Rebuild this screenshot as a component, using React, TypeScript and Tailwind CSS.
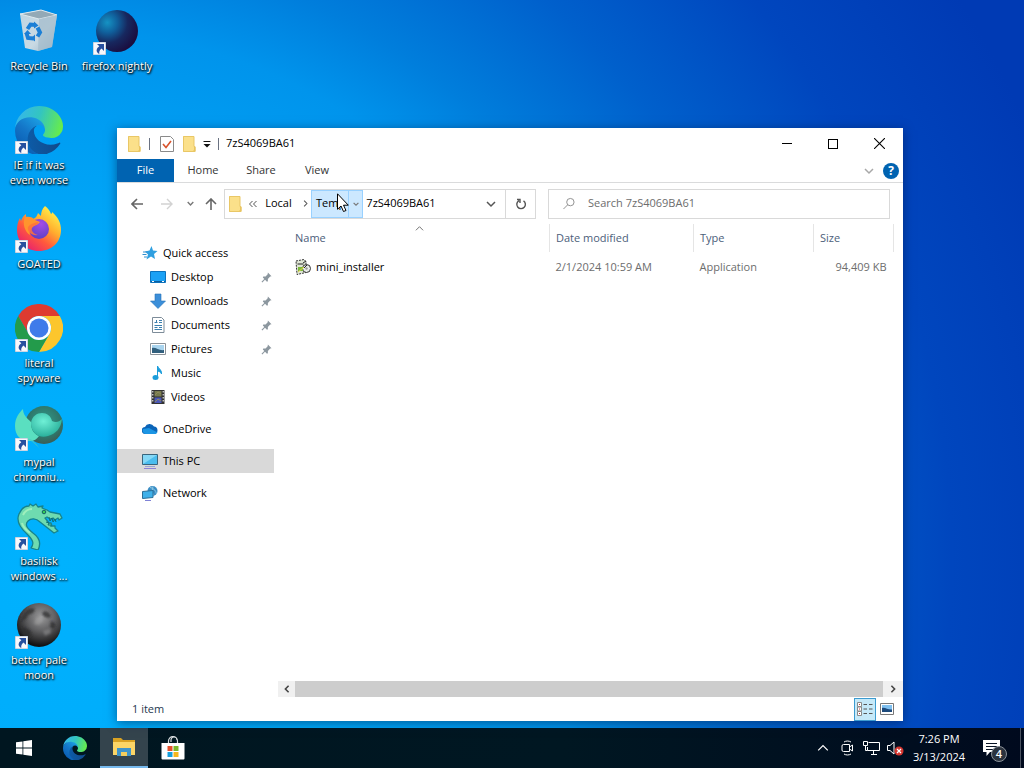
import type { ReactNode } from 'react'

const font = "font-['Open_Sans','Noto_Sans',sans-serif]"

const RecycleBin = () => (
  <svg viewBox="0 0 48 48" className="h-12 w-12">
    <defs>
      <linearGradient id="bin" x1="0" y1="0" x2="1" y2="1">
        <stop offset="0" stopColor="#c9d9e2" />
        <stop offset="0.6" stopColor="#d3dde3" />
        <stop offset="1" stopColor="#9fb4c4" />
      </linearGradient>
    </defs>
    <path d="M5 7l21-4 16 5-5 32-14 4-13-3z" fill="url(#bin)" opacity="0.95" />
    <path d="M5 7l21-4 16 5-18 4z" fill="#93a9b6" stroke="#dfe9ee" />
    <path d="M24 12l18-4-5 32-14 4z" fill="#a3bacb" opacity="0.7" />
    <g fill="none" stroke="#1b7fd6" strokeWidth="4">
      <path d="M12.500 22l3-4.500 5 0.500" />
      <path d="M22.500 20.500l2.500 5-2.500 4" />
      <path d="M18.500 31.500l-5.500-0.500-1.500-5" />
    </g>
    <path d="M19 14.500l4.500 4-4.500 3zM20 27.500v7l-4-3zM9 27l3.500-4 3.500 4z" fill="#1b7fd6" />
  </svg>
)

const Nightly = () => (
  <svg viewBox="0 0 48 48" className="h-12 w-12">
    <defs>
      <radialGradient id="nightly" cx="0.27" cy="0.3" r="0.8">
        <stop offset="0" stopColor="#1593c4" />
        <stop offset="0.3" stopColor="#10609c" />
        <stop offset="0.6" stopColor="#17285f" />
        <stop offset="1" stopColor="#1b0b3c" />
      </radialGradient>
    </defs>
    <circle cx="24" cy="24" r="21" fill="url(#nightly)" />
  </svg>
)

const Edge = ({ className }: { className: string }) => (
  <svg viewBox="0 0 256 256" className={className}>
    <defs>
      <linearGradient id="edge-a" x1="60" y1="177" x2="240" y2="177" gradientUnits="userSpaceOnUse">
        <stop offset="0" stopColor="#0c5ca8" />
        <stop offset="1" stopColor="#114a8b" />
      </linearGradient>
      <linearGradient id="edge-b" x1="150" y1="90" x2="40" y2="225" gradientUnits="userSpaceOnUse">
        <stop offset="0" stopColor="#1b9de2" />
        <stop offset="0.5" stopColor="#1476c8" />
        <stop offset="1" stopColor="#0b5fb4" />
      </linearGradient>
      <linearGradient id="edge-c" x1="20" y1="60" x2="240" y2="130" gradientUnits="userSpaceOnUse">
        <stop offset="0" stopColor="#35b8e6" />
        <stop offset="0.45" stopColor="#33c5c0" />
        <stop offset="1" stopColor="#66eb4e" />
      </linearGradient>
    </defs>
    <path
      d="M235.680 195.460a93.730 93.730 0 0 1-10.540 4.710 101.870 101.870 0 0 1-35.900 6.460c-47.320 0-88.540-32.550-88.540-74.320a31.480 31.480 0 0 1 16.430-27.310c-42.800 1.800-53.800 46.400-53.800 72.530 0 73.880 68.090 81.370 82.760 81.370 7.910 0 19.840-2.300 27-4.560l1.310-.44a128.340 128.340 0 0 0 66.600-52.800 4 4 0 0 0-5.320-5.640z"
      fill="url(#edge-a)"
    />
    <path
      d="M105.700 246.600a79.200 79.200 0 0 1-22.740-21.340 80.720 80.720 0 0 1 29.530-120c3.120-1.470 8.450-4.130 15.540-4a32.350 32.350 0 0 1 25.690 13 31.880 31.880 0 0 1 6.360 18.660c0-.21 24.460-79.600-80-79.600-43.900 0-80 41.660-80 78.210a130.150 130.150 0 0 0 12.110 56 128 128 0 0 0 156.380 67.110 75.550 75.550 0 0 1-62.780-8z"
      fill="url(#edge-b)"
    />
    <path
      d="M152.330 148.860c-.81 1.050-3.300 2.500-3.300 5.660 0 2.610 1.700 5.120 4.720 7.230 14.380 10 41.490 8.680 41.560 8.680a59.560 59.560 0 0 0 30.270-8.350A61.380 61.380 0 0 0 256 109.190c.26-22.410-8-37.310-11.340-43.910C223.460 23.840 177.720 0 128 0A128 128 0 0 0 0 126.200c.48-36.540 36.800-66.050 80-66.050 3.500 0 23.460.34 42 10.070 16.340 8.580 24.900 18.940 30.850 29.210 6.180 10.670 7.280 24.150 7.280 29.520s-2.740 13.330-7.800 19.910z"
      fill="url(#edge-c)"
    />
  </svg>
)

const Firefox = () => (
  <svg viewBox="0 0 48 48" className="h-12 w-12">
    <defs>
      <linearGradient id="fox" x1="0.85" y1="0.1" x2="0.2" y2="0.95">
        <stop offset="0" stopColor="#fff04a" />
        <stop offset="0.35" stopColor="#ffb02e" />
        <stop offset="0.65" stopColor="#ff5a3c" />
        <stop offset="1" stopColor="#e8206f" />
      </linearGradient>
      <radialGradient id="fox-globe" cx="0.6" cy="0.25" r="0.8">
        <stop offset="0" stopColor="#a34be8" />
        <stop offset="1" stopColor="#5940c4" />
      </radialGradient>
    </defs>
    <path
      d="M30 1c3 2 5 5 6 8 1-0.500 1-1 1-2 6 5 9 11 9 18 0 12-9 21-22 21C11 46 2 37 2 25c0-5 1-9 3-12l1 3c1-3 2-5 5-7l0 4c3-0.500 5 0 7 1 3-1 4-3 5-6 1 1 2 2 3 3 0-4 1-7 4-10z"
      fill="url(#fox)"
    />
    <circle cx="24" cy="24" r="10" fill="url(#fox-globe)" />
    <path d="M10 12c4-1 8 0 10 3l5 2c-1 2-4 3-6 4-3 2-5 5-4 9-5-3-8-11-5-18z" fill="#ff942d" />
    <path d="M13 22c2-3 6-4 10-5 1 3-5 3-6 6 -1 3 2 6 6 7-6 1-11-3-10-8z" fill="#ff7139" opacity="0.85" />
  </svg>
)

const Chrome = () => (
  <svg viewBox="0 0 48 48" className="h-12 w-12">
    <path d="M3.200 12a24 24 0 0 1 41.600 0H24a12 12 0 0 0-10.400 18z" fill="#de3b30" />
    <path d="M44.800 12A24 24 0 0 1 24 48l10.400-18A12 12 0 0 0 24 12z" fill="#fcc62d" />
    <path d="M24 48A24 24 0 0 1 3.200 12l10.400 18a12 12 0 0 0 20.800 0z" fill="#239b4b" />
    <circle cx="24" cy="24" r="12" fill="#fff" />
    <circle cx="24" cy="24" r="9.500" fill="#3f7bea" />
  </svg>
)

const Mypal = () => (
  <svg viewBox="0 0 48 48" className="h-12 w-12">
    <defs>
      <radialGradient id="mypal-dark" cx="0.5" cy="0.4" r="0.6">
        <stop offset="0" stopColor="#2f9c8c" />
        <stop offset="0.7" stopColor="#2f766a" />
        <stop offset="1" stopColor="#3b5c55" />
      </radialGradient>
      <radialGradient id="mypal-light" cx="0.4" cy="0.35" r="0.7">
        <stop offset="0" stopColor="#6ff0d6" />
        <stop offset="1" stopColor="#25ab97" />
      </radialGradient>
    </defs>
    <ellipse cx="29" cy="22" rx="19" ry="19" fill="url(#mypal-dark)" />
    <path d="M8 6c0 6 4 9 8 13 0 8 3 12 8 14-2 3-5 5-9 5C6 38 0 33 0 23 0 15 4 10 8 6z" fill="#5adfc0" />
    <path d="M16 20c1-7 6-10 11-10s9 3 10 8c4 2 7 1 10-2-1 9-6 15-14 17-3 1-6 1-9 0-5-2-8-7-8-13z" fill="url(#mypal-light)" />
    <path d="M9 36c6 0 10 4 16 10-4-6-7-9-10-10z" fill="#4fc7c0" opacity="0.6" />
  </svg>
)

const Basilisk = () => (
  <svg viewBox="0 0 48 48" className="h-12 w-12">
    <path
      d="M16 46c4-5 1-9-4-14C4 25 1 19 4 12 7 5 12 4 14 4l1-2 3 2 3-2 2 3 5-1-1 2 5 2 3 2 10 2 2 4-3 2-1-2-3 2-2-2-3 1-3-2-2 1 4 5 2 0 1 3 3 0 0 2 3 3-4 2-14-11c-4-4-9-4-12-1-4 4 0 8 5 12 7 5 8 11 5 17z"
      fill="#6edbb0"
      stroke="#17838c"
      strokeWidth="1.300"
      strokeLinejoin="round"
    />
    <path d="M8 13c2-4 5-6 9-6M7 21c1 4 4 7 8 10" stroke="#9fefbc" strokeWidth="2" fill="none" />
    <circle cx="29" cy="10" r="1.800" fill="#35cf55" stroke="#135f63" />
    <path d="M34 15l1 4 2-3 1 4 2-3 1 3M31 20l3 1-1 2 3 0 0 2" stroke="#0d7076" fill="none" />
  </svg>
)

const PaleMoon = () => (
  <svg viewBox="0 0 48 48" className="h-12 w-12">
    <defs>
      <radialGradient id="moon" cx="0.55" cy="0.32" r="0.65">
        <stop offset="0" stopColor="#9a9a9b" />
        <stop offset="0.5" stopColor="#5e5e60" />
        <stop offset="1" stopColor="#121213" />
      </radialGradient>
      <filter id="moon-soft">
        <feGaussianBlur stdDeviation="1" />
      </filter>
    </defs>
    <circle cx="24" cy="24" r="22" fill="url(#moon)" />
    <g filter="url(#moon-soft)">
      <path
        d="M8 14c3-6 8-8 12-6l-2 4-5 2-2 4-5 2zM29 10l4 1 3 4-2 2-4-1-3-3zM36 20l5 3-2 5-4-2zM8 26l7 3 2 6-6 1-5-5z"
        fill="#2c2c2f"
        opacity="0.75"
      />
      <path d="M21 17l5-1 2 4-4 4-5-1zM28 30l7-2 1 4-6 3z" fill="#b5b5b5" opacity="0.35" />
    </g>
  </svg>
)

const Folder = () => (
  <svg viewBox="0 0 16 18" className="h-[18px] w-4 shrink-0">
    <path d="M2 1h11v11h1.500v4.500H2z" fill="#e8c25c" />
    <path d="M2 1h11v14l-1.500 1.500H2z" fill="#fbe08a" />
    <path d="M2.500 1.500h10.500v10h1v5H2.500z" fill="none" stroke="#e9c766" />
  </svg>
)

const Chevron = ({ d, className }: { d: string; className: string }) => (
  <svg viewBox="0 0 10 10" fill="none" stroke="currentColor" className={className}>
    <path d={d} />
  </svg>
)

const down = 'M1 3l4 4 4-4'
const up = 'M1 7l4-4 4 4'
const left = 'M7 1L3 5l4 4'
const right = 'M3 1l4 4-4 4'

const ShortcutArrow = () => (
  <svg viewBox="0 0 13 13" className="absolute bottom-0 left-0 h-[13px] w-[13px]">
    <path d="M0 0h13v13H0z" fill="#f8f8fb" stroke="#9fb4cc" />
    <path d="M4 2h7v7L8.500 6.500C6.500 8 6 9.500 6.300 12 2.500 10 3 6.500 6.300 4.300z" fill="#27509f" />
  </svg>
)

type DesktopItem = { label: string; icon: ReactNode; shortcut?: boolean }

const columns: DesktopItem[][] = [
  [
    { label: 'Recycle Bin', icon: <RecycleBin /> },
    { label: 'IE if it was\neven worse', icon: <Edge className="h-12 w-12" />, shortcut: true },
    { label: 'GOATED', icon: <Firefox />, shortcut: true },
    { label: 'literal\nspyware', icon: <Chrome />, shortcut: true },
    { label: 'mypal\nchromiu...', icon: <Mypal />, shortcut: true },
    { label: 'basilisk\nwindows ...', icon: <Basilisk />, shortcut: true },
    { label: 'better pale\nmoon', icon: <PaleMoon />, shortcut: true },
  ],
  [{ label: 'firefox nightly', icon: <Nightly />, shortcut: true }],
]

const Desktop = () => (
  <div className="flex">
    {columns.map((items, i) => (
      <div key={i} className="flex w-[78px] flex-col">
        {items.map((item) => (
          <button key={item.label} className="flex h-[99px] flex-col items-center pt-[7px]">
            <span className="relative">
              {item.icon}
              {item.shortcut && <ShortcutArrow />}
            </span>
            <span className="mt-[3px] text-[11px] leading-[15px] whitespace-pre text-white [text-shadow:1px_1px_2px_#000,0_1px_2px_#000]">
              {item.label}
            </span>
          </button>
        ))}
      </div>
    ))}
  </div>
)

const TitleBar = () => (
  <div className="flex h-[31px] items-center pl-[9px]">
    <Folder />
    <span className="mx-[7px] h-3 w-px bg-gray-500" />
    <button aria-label="Properties" className="ml-[3px]">
      <svg viewBox="0 0 14 16" className="h-4 w-[14px]">
        <path d="M0.500 0.500h10l3 3v12h-13z" fill="#fff" stroke="#8a8a8a" />
        <path d="M3 8l3 3.500L11 5" fill="none" stroke="#d8532c" strokeWidth="1.600" />
      </svg>
    </button>
    <button aria-label="New folder" className="ml-[7px]">
      <Folder />
    </button>
    <button aria-label="Customize toolbar" className="ml-[6px]">
      <svg viewBox="0 0 8 8" className="h-2 w-2">
        <path d="M0.500 1.500h7" stroke="#111" />
        <path d="M0.500 4h7L4 7.500z" fill="#111" />
      </svg>
    </button>
    <span className="mx-[7px] h-3 w-px bg-gray-500" />
    <h1 className="text-[11px] text-black">7zS4069BA61</h1>
    <div className="ml-auto flex h-full pr-px text-black">
      <button aria-label="Minimize" className="flex w-[46px] items-center justify-center">
        <span className="h-px w-[10px] bg-black" />
      </button>
      <button aria-label="Maximize" className="flex w-[46px] items-center justify-center">
        <span className="h-[10px] w-[10px] border border-black" />
      </button>
      <button aria-label="Close" className="flex w-[46px] items-center justify-center">
        <Chevron d="M0 0l10 10M10 0L0 10" className="h-[11px] w-[11px]" />
      </button>
    </div>
  </div>
)

const Ribbon = () => (
  <div className="flex h-[24px] border-b border-[#dadbdc] text-[11px] text-[#333]">
    <button className="w-[57px] bg-[#0063b1] text-white">File</button>
    <button className="w-[58px]">Home</button>
    <button className="w-[58px]">Share</button>
    <button className="w-[54px]">View</button>
    <div className="ml-auto flex items-center gap-[9px] pr-1">
      <button aria-label="Expand the ribbon">
        <Chevron d={down} className="h-[10px] w-[10px] stroke-[1.5] text-[#a8a8a8]" />
      </button>
      <button
        aria-label="Help"
        className="h-4 w-4 rounded-full bg-[#0063b1] text-[12px] leading-4 font-bold text-white"
      >
        ?
      </button>
    </div>
  </div>
)

const AddressBar = () => (
  <div className="flex h-[41px] items-center pr-[13px] pl-[5px] text-[#444]">
    <button aria-label="Back" className="flex w-[30px] justify-center">
      <svg viewBox="0 0 12 12" className="h-3 w-3 text-[#666]" fill="none" stroke="currentColor" strokeWidth="1.600">
        <path d="M12 6H1M6 1L1 6l5 5" />
      </svg>
    </button>
    <button aria-label="Forward" className="flex w-[30px] justify-center">
      <svg viewBox="0 0 12 12" className="h-3 w-3 text-[#d2d2d2]" fill="none" stroke="currentColor" strokeWidth="1.400">
        <path d="M0 6h11M6 1l5 5-5 5" />
      </svg>
    </button>
    <button aria-label="Recent locations" className="flex w-4 justify-center">
      <Chevron d={down} className="h-[7px] w-[7px] stroke-2 text-[#777]" />
    </button>
    <button aria-label="Up" className="flex w-[26px] justify-center">
      <svg viewBox="0 0 12 12" className="h-3 w-3 text-[#666]" fill="none" stroke="currentColor" strokeWidth="1.600">
        <path d="M6 12V1M1 6l5-5 5 5" />
      </svg>
    </button>
    <div className="flex h-[30px] flex-1 items-center border border-[#d9d9d9] text-[11px] text-black">
      <span className="ml-[2px]">
        <Folder />
      </span>
      <button aria-label="More locations" className="ml-[5px] w-[10px]">
        <svg viewBox="0 0 10 8" className="h-2 w-[10px]" fill="none" stroke="#555">
          <path d="M4.500 1l-3 3 3 3M8.500 1l-3 3 3 3" />
        </svg>
      </button>
      <button className="ml-[5px] w-[31px]">Local</button>
      <span className="ml-[5px] flex w-[12px] justify-center">
        <Chevron d={right} className="h-[7px] w-[7px] stroke-[1.5] text-[#555]" />
      </span>
      <button className="h-[28px] w-[38px] shrink-0 border border-[#99d1ff] bg-[#cce8ff] pl-1 text-left">
        Temp
      </button>
      <button
        aria-label="Folders in Temp"
        className="flex h-[28px] w-[14px] items-center justify-center border border-l-0 border-[#99d1ff] bg-[#cce8ff]"
      >
        <Chevron d={down} className="h-[6px] w-[6px] stroke-2 text-[#777]" />
      </button>
      <button className="w-[76px] text-center">7zS4069BA61</button>
      <button aria-label="Previous locations" className="ml-auto flex w-[28px] justify-center">
        <Chevron d={down} className="h-[10px] w-[10px] stroke-[1.5] text-[#555]" />
      </button>
      <button aria-label="Refresh" className="flex h-full w-[30px] items-center justify-center border-l border-[#d9d9d9]">
        <svg viewBox="0 0 12 12" className="h-3 w-3 text-[#555]" fill="none" stroke="currentColor" strokeWidth="1.400">
          <path d="M8.500 2.800A4.300 4.300 0 1 1 4 2.600M2 1.500h3V5" />
        </svg>
      </button>
    </div>
    <label className="ml-3 flex h-[30px] w-[342px] items-center border border-[#d9d9d9] pl-[14px]">
      <svg viewBox="0 0 13 13" className="h-[13px] w-[13px] text-[#8a8a8a]" fill="none" stroke="currentColor">
        <circle cx="8" cy="5" r="4" />
        <path d="M5 8l-4.500 4.500" />
      </svg>
      <input
        aria-label="Search 7zS4069BA61"
        placeholder="Search 7zS4069BA61"
        className="ml-[13px] w-full text-[11px] outline-none placeholder:text-[#6d6d6d]"
      />
    </label>
  </div>
)

const icons: Record<string, ReactNode> = {
  star: (
    <>
      <path d="M9.500 1l1.500 4.500 4.500 0.500-3.500 3 1 5-4-2.500-4.500 3 1.500-5L3 6.500l4.500-1z" fill="#2f9fe0" />
      <path d="M1 7h4M0.500 9.500h4M2 12h3" stroke="#2f8fd0" />
    </>
  ),
  desktop: (
    <>
      <path d="M0.500 2.500h15v11h-15z" fill="#1ba1f5" stroke="#0c72bd" />
      <path d="M1 12.500h14" stroke="#0b5d9e" />
      <path d="M2 12.500h2M12 12.500h2" stroke="#fff" />
    </>
  ),
  downloads: <path d="M5 1h6v7h4.500L8 15.500 0.500 8H5z" fill="#3c8fd9" stroke="#2672b8" strokeWidth="0.600" />,
  documents: (
    <>
      <path d="M2.500 0.500h9l2.500 2.500v12.500H2.500z" fill="#fff" stroke="#7d8c99" />
      <path d="M4.500 5.500h3M9 3.500h3M9 5.500h3M4.500 8.500h7.500M4.500 10.500h3M9 10.500h3M4.500 12.500h7.500M6.500 3v3" stroke="#3c7fae" />
    </>
  ),
  pictures: (
    <>
      <path d="M0.500 2.500h15v11h-15z" fill="#fff" stroke="#8b9298" />
      <path d="M2 4h12v8H2z" fill="#a9d4ee" />
      <path d="M2 7c4-1 7 3 12 2v3H2z" fill="#315f7d" />
    </>
  ),
  music: (
    <>
      <path d="M7.500 12V1c1 3 4.500 3.500 4 8-0.500-2-2-2.500-4-3" fill="#1b9ddb" stroke="#1b9ddb" />
      <ellipse cx="5.500" cy="12.500" rx="3" ry="2.500" fill="#1b9ddb" />
    </>
  ),
  videos: (
    <>
      <path d="M1.500 1h13v14h-13z" fill="#333" />
      <path d="M2.800 2v12M13.200 2v12" stroke="#fff" strokeDasharray="1.500 1.500" />
      <path d="M4.500 2h7v5.500h-7z" fill="#777a4e" />
      <path d="M4.500 8.500h7V14h-7z" fill="#4c58b8" />
      <path d="M5 6l3-3 3 2M5 13l3-3 3 2" stroke="#8f8a5c" fill="none" />
    </>
  ),
  onedrive: (
    <>
      <path d="M3.500 13a3.500 3.500 0 0 1-0.500-7 5 5 0 0 1 9-0.500 3.800 3.800 0 0 1 0.500 7.500z" fill="#0a64b8" />
      <path d="M3.500 13a3.500 3.500 0 0 1-2.500-5l6-1 8.500 4.500c-0.500 0.900-1.500 1.500-3 1.500z" fill="#1c95e4" />
    </>
  ),
  pc: (
    <>
      <path d="M0.500 1.500h15v10h-15z" fill="#4bbdee" stroke="#39657d" />
      <path d="M1 11V2h14z" fill="#85d8f6" />
      <path d="M3 13.500h10" stroke="#9aa5d6" />
      <path d="M2 15.500h12" stroke="#8d83d8" />
    </>
  ),
  network: (
    <>
      <circle cx="10.500" cy="6" r="5" fill="#3a8dc4" />
      <path d="M8 2.500c3.500 0.500 6 3 6.500 6.500M11 1.500c-1 3-1 5 0.500 9" stroke="#8fcae6" fill="none" />
      <path d="M0.500 6.500l10.500-1v7l-10.500 1z" fill="#3fb1ea" stroke="#2b6f97" />
      <path d="M3 15.500h6" stroke="#7f82d6" />
    </>
  ),
  installer: (
    <>
      <path d="M1 2l8-1.500 2 2v11L2 15.500z" fill="#dfe6d5" stroke="#333" strokeDasharray="2 1" />
      <circle cx="11.500" cy="9.500" r="4" fill="#e9ece9" stroke="#333" />
      <path d="M2.500 5h6M8 4l3-2M9 9l3-3" stroke="#222" />
      <path d="M3 8h5v4H3z" fill="#7bb83a" />
      <path d="M3 13l6-5" stroke="#e7d34c" />
      <circle cx="11.500" cy="9.500" r="1.200" fill="#9b9b9b" />
    </>
  ),
}

const Icon = ({ name }: { name: string }) => (
  <svg viewBox="0 0 16 16" className="h-4 w-4 shrink-0">
    {icons[name]}
  </svg>
)

const Pin = () => (
  <svg viewBox="0 0 12 12" className="mr-[2px] ml-auto h-[11px] w-[11px]">
    <path d="M7.500 0.500l4 4-1.500 0.500-2.500 2.500v2.500l-1 0.500L2 6l0.500-1H5L7.300 2.500z" fill="#8c979f" />
    <path d="M4.500 7.500L1 11" stroke="#8c979f" strokeWidth="1.200" />
  </svg>
)

const places = [
  { label: 'Desktop', icon: 'desktop', pinned: true },
  { label: 'Downloads', icon: 'downloads', pinned: true },
  { label: 'Documents', icon: 'documents', pinned: true },
  { label: 'Pictures', icon: 'pictures', pinned: true },
  { label: 'Music', icon: 'music', pinned: false },
  { label: 'Videos', icon: 'videos', pinned: false },
]

const roots = [
  { label: 'OneDrive', icon: 'onedrive' },
  { label: 'This PC', icon: 'pc', selected: true },
  { label: 'Network', icon: 'network' },
]

const Sidebar = () => (
  <nav className="w-[157px] shrink-0 pt-[17px] text-[11px] text-black">
    <a href="#quick-access" className="flex h-6 items-center gap-[5px] pl-[25px]">
      <Icon name="star" />
      Quick access
    </a>
    {places.map((p) => (
      <a key={p.label} href={`#${p.icon}`} className="flex h-6 items-center gap-[5px] pl-[33px]">
        <Icon name={p.icon} />
        {p.label}
        {p.pinned && <Pin />}
      </a>
    ))}
    {roots.map((r) => (
      <a
        key={r.label}
        href={`#${r.icon}`}
        className={`mt-2 flex h-6 items-center gap-[5px] pl-[25px] ${r.selected ? 'bg-[#d9d9d9]' : ''}`}
      >
        <Icon name={r.icon} />
        {r.label}
      </a>
    ))}
  </nav>
)

const FileList = () => (
  <div className="flex min-w-0 flex-1 flex-col pl-1">
    <table className="mr-[9px] table-fixed border-collapse text-left text-[11px] text-[#6d6d6d]">
      <thead>
        <tr className="h-[28px] text-[#4c607a] [&>th]:border-r [&>th]:border-[#e5e5e5] [&>th]:font-normal">
          <th className="relative pl-[17px]">
            Name
            <Chevron d={up} className="absolute top-0 left-[137px] h-[9px] w-[9px] text-[#666]" />
          </th>
          <th className="w-[144px] pl-[6px]">Date modified</th>
          <th className="w-[120px] pl-[6px]">Type</th>
          <th className="w-[80px] pl-[6px]">Size</th>
        </tr>
      </thead>
      <tbody>
        <tr className="h-[30px]">
          <td className="pl-[17px] text-black">
            <span className="flex items-center gap-[5px]">
              <Icon name="installer" />
              mini_installer
            </span>
          </td>
          <td className="pl-[6px]">2/1/2024 10:59 AM</td>
          <td className="pl-[6px]">Application</td>
          <td className="pr-[7px] text-right">94,409 KB</td>
        </tr>
      </tbody>
    </table>
    <div className="mt-auto flex h-4 bg-[#f0f0f0] text-[#444]">
      <button aria-label="Scroll left" className="flex w-[17px] items-center justify-center">
        <Chevron d={left} className="h-2 w-2 stroke-2" />
      </button>
      <span className="flex-1 bg-[#cdcdcd]" />
      <button aria-label="Scroll right" className="flex w-5 items-center justify-center">
        <Chevron d={right} className="h-2 w-2 stroke-2" />
      </button>
    </div>
  </div>
)

const StatusBar = () => (
  <div className="flex h-[24px] items-center pl-[15px] text-[11px] text-[#26384f]">
    1 item
    <div className="mr-[5px] ml-auto flex items-center">
      <button
        aria-label="Details view"
        className="flex h-[23px] w-[22px] items-center justify-center border border-[#3c9bd0] bg-[#c5e9f9]"
      >
        <svg viewBox="0 0 16 14" className="h-[14px] w-4" fill="none">
          <path d="M0.500 0.500h4v4h-4zM0.500 5h4v4h-4zM0.500 9.500h4v4h-4z" fill="#fff" stroke="#8a8a8a" />
          <path d="M2 2.500h1M2 7h1M2 11.500h1" stroke="#c23a3a" />
          <path d="M6.500 2.500h3.500M12 2.500h3.500M6.500 7h3.500M12 7h3.500M6.500 11.500h3.500M12 11.500h3.500" stroke="#555" />
        </svg>
      </button>
      <button aria-label="Large icons view" className="flex w-[22px] justify-center">
        <svg viewBox="0 0 14 12" className="h-3 w-[14px]">
          <path d="M0.500 0.500h13v11h-13z" fill="#fff" stroke="#777" />
          <path d="M2 2h10v7H2z" fill="#7fc0f0" />
          <path d="M2 5c3-1 6 2 10 1.500V9H2z" fill="#1d4a7c" />
        </svg>
      </button>
    </div>
  </div>
)

const Explorer = () => (
  <section className="absolute top-[128px] right-[121px] bottom-[7px] left-[117px] flex flex-col bg-white shadow-[0_2px_10px_rgba(0,20,60,0.5)]">
    <TitleBar />
    <Ribbon />
    <AddressBar />
    <div className="flex flex-1">
      <Sidebar />
      <FileList />
    </div>
    <StatusBar />
  </section>
)

const Cursor = () => (
  <svg viewBox="0 0 12 19" className="pointer-events-none absolute top-[193px] left-[337px] h-[19px] w-3">
    <path d="M0.500 0.800v15.500l3.500-3.300 2.500 5.500 2.500-1-2.500-5.300h4.800z" fill="#fff" stroke="#000" />
  </svg>
)

const Taskbar = () => (
  <footer className="flex h-10 bg-[linear-gradient(90deg,#001620,#001722_55%,#000a1e)] text-white">
    <button aria-label="Start" className="flex w-12 items-center justify-center">
      <svg viewBox="0 0 16 16" className="h-4 w-4" fill="#fff">
        <path d="M0 2.300l6.500-0.900v6.200H0zM7.300 1.300L16 0v7.600H7.300zM0 8.400h6.500v6.200L0 13.700zM7.300 8.400H16V16l-8.700-1.200z" />
      </svg>
    </button>
    <button aria-label="Microsoft Edge" className="flex w-[52px] items-center justify-center pl-[2px]">
      <Edge className="h-6 w-6" />
    </button>
    <button
      aria-label="File Explorer"
      className="flex w-12 items-center justify-center border-b-2 border-[#76b9ed] bg-[#34444d]"
    >
      <svg viewBox="0 0 22 18" className="h-[18px] w-[22px]">
        <path d="M0 0h8l2 2h12v4H0z" fill="#d9a223" />
        <path d="M0 4h22v13H0z" fill="#fbd566" />
        <path d="M4 18v-8h14v8h-4v-4H8v4z" fill="#3f94c9" />
        <path d="M8 14h6v4H8z" fill="#f5cd5c" />
      </svg>
    </button>
    <button aria-label="Microsoft Store" className="flex w-[50px] items-center justify-center">
      <svg viewBox="0 0 24 24" className="h-6 w-6">
        <path d="M7.500 8V5a4.500 4.500 0 0 1 9 0v3M10 6V4a3 3 0 0 1 6 0" fill="none" stroke="#d8dde0" strokeWidth="1.200" />
        <path d="M0.500 7h23v15.500a1 1 0 0 1-1 1h-21a1 1 0 0 1-1-1z" fill="#fff" />
        <path d="M6.500 10h5v5h-5z" fill="#e4502c" />
        <path d="M12.500 10h5v5h-5z" fill="#7cb82b" />
        <path d="M6.500 16h5v5h-5z" fill="#169fdd" />
        <path d="M12.500 16h5v5h-5z" fill="#f6b71d" />
      </svg>
    </button>
    <div className="ml-auto flex items-center">
      <button aria-label="Show hidden icons" className="mr-[12px]">
        <Chevron d={up} className="h-3 w-3" />
      </button>
      <button aria-label="Meet now" className="mr-[9px]">
        <svg viewBox="0 0 13 16" className="h-4 w-[13px]" fill="none" stroke="#fff">
          <path d="M2.500 4.500h6v7h-6a1.500 1.500 0 0 1-1.500-1.500V6a1.500 1.500 0 0 1 1.500-1.500zM8.500 7l3-2v6l-3-2M3 2c2-1.300 5-1.300 7 0M3 14c2 1.300 5 1.300 7 0" />
        </svg>
      </button>
      <button aria-label="Network" className="mr-[7px]">
        <svg viewBox="0 0 17 16" className="h-4 w-[17px]" fill="none" stroke="#fff">
          <path d="M5.500 2.500h11v8h-12V7M8 14.500h6M10.500 10.500v4M0.500 1.500h4v4h-4zM2.500 5.500v5h2" />
        </svg>
      </button>
      <button aria-label="Volume muted" className="mr-[7px]">
        <svg viewBox="0 0 17 16" className="h-4 w-[17px]" fill="none">
          <path d="M0.500 5.500h2.500L7 2v12l-4-3.500H0.500z" stroke="#fff" />
          <circle cx="12" cy="11" r="4.500" fill="#d5352f" />
          <path d="M10 9l4 4M14 9l-4 4" stroke="#fff" strokeWidth="1.200" />
        </svg>
      </button>
      <button className="w-[56px] text-center text-[11px] leading-[18px] whitespace-nowrap">
        7:26 PM
        <br />
        3/13/2024
      </button>
      <button aria-label="4 new notifications" className="relative mr-[17px] ml-[16px] h-5 w-[20px]">
        <svg viewBox="0 0 17 17" className="h-[17px] w-[17px]">
          <path d="M0 0h17v12H7l-3.500 4v-4H0z" fill="#fff" />
          <path d="M3 3.500h11M3 6.500h11M3 9.500h7" stroke="#0a1526" />
        </svg>
        <span className="absolute top-2 left-2 h-4 w-4 rounded-full border border-[#8b929a] bg-[#2b333e] text-[11px] leading-[14px] font-semibold">
          4
        </span>
      </button>
      <button aria-label="Show desktop" className="h-10 w-[4px] border-l border-[#4a5260]" />
    </div>
  </footer>
)

const App = () => {
  return (
    <div className={`flex h-screen flex-col overflow-hidden ${font}`}>
      <main className="relative flex-1 bg-[radial-gradient(circle_at_6%_77%,#00b2fe_0px,#00aafa_300px,#0094ec_530px,#007edc_610px,#0060cc_740px,#0046be_890px,#003ab4_1060px)]">
        <Desktop />
        <Explorer />
        <Cursor />
      </main>
      <Taskbar />
    </div>
  )
}

export default App
